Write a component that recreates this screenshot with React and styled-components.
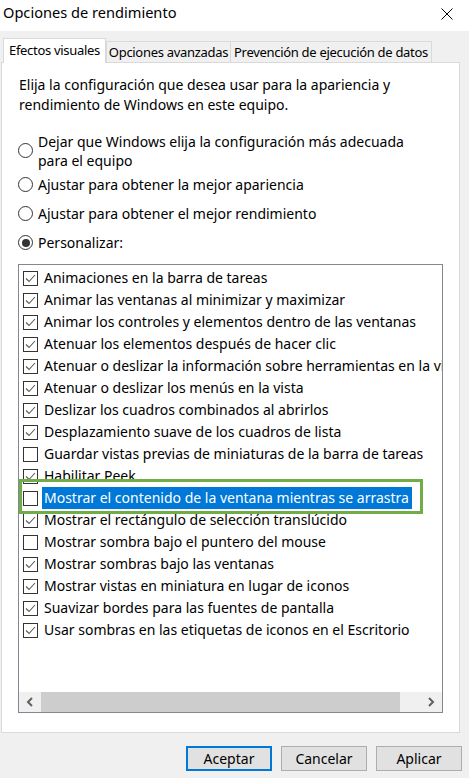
import React from 'react';
import styled, { createGlobalStyle } from 'styled-components';

const GlobalStyle = createGlobalStyle`
  html, body { margin: 0; padding: 0; background: #ffffff; }
  body { font-family: "Noto Sans", "Open Sans", sans-serif; }
  *, *::before, *::after { box-sizing: border-box; }
`;

const Window = styled.div`
  width: 469px;
  height: 778px;
  background: #f0f0f0;
  color: #000;
  font-size: 14px;
  display: flex;
  flex-direction: column;
`;

const TitleBar = styled.div`
  height: 31px;
  background: #ffffff;
  display: flex;
  align-items: flex-start;
  justify-content: space-between;
  padding: 2px 16px 0 3px;
`;

const Title = styled.span`
  font-size: 14.6px;
  line-height: 21px;
`;

const CloseIcon = styled.svg`
  margin-top: 6px;
  width: 12px;
  height: 12px;
`;

const TabStrip = styled.div`
  margin-top: 7px;
  margin-bottom: -1px;
  padding-left: 3px;
  height: 25px;
  display: flex;
  align-items: flex-end;
  position: relative;
  z-index: 2;
`;

const Tab = styled.div`
  width: ${p => p.$w}px;
  height: ${p => (p.$active ? 25 : 21)}px;
  margin-bottom: ${p => (p.$active ? 0 : 1)}px;
  margin-left: ${p => (p.$overlap ? -1 : 0)}px;
  background: ${p => (p.$active ? '#ffffff' : '#f0f0f0')};
  border: 1px solid #d9d9d9;
  border-bottom: none;
  display: flex;
  align-items: center;
  justify-content: center;
  padding-bottom: ${p => (p.$active ? 2 : 0)}px;
  white-space: nowrap;
  font-size: 13px;
  letter-spacing: -0.3px;
`;

const Panel = styled.div`
  margin-left: 1px;
  width: 459px;
  height: 671px;
  background: #ffffff;
  border: 1px solid #d9d9d9;
  padding: 12px 16px 0 16px;
  display: flex;
  flex-direction: column;
`;

const Description = styled.p`
  margin: 0 0 0 1px;
  line-height: 20px;
`;

const RadioGroup = styled.div`
  margin-top: 17px;
  display: flex;
  flex-direction: column;
  gap: 10px;
`;

const RadioRow = styled.label`
  display: flex;
  align-items: center;
  gap: 5px;
  line-height: 19px;
  margin-bottom: ${p => (p.$tight ? -5 : 0)}px;
`;

const RadioCircle = styled.span`
  flex: none;
  width: 15px;
  height: 15px;
  border: 1px solid #333333;
  border-radius: 50%;
  display: flex;
  align-items: center;
  justify-content: center;
  margin-top: ${p => (p.$up ? -2 : 0)}px;
  &::after {
    content: '';
    width: 8px;
    height: 8px;
    border-radius: 50%;
    background: #333333;
    display: ${p => (p.$checked ? 'block' : 'none')};
  }
`;

const ListBox = styled.div`
  margin-top: 12px;
  height: 449px;
  border: 1px solid #828790;
  display: flex;
  flex-direction: column;
`;

const ListViewport = styled.div`
  flex: 1;
  overflow: hidden;
  padding: 2px 0 0 4px;
`;

const Row = styled.div`
  position: relative;
  height: 22px;
  display: flex;
  align-items: center;
  gap: 4px;
  white-space: nowrap;
`;

const Box = styled.span`
  flex: none;
  width: 15px;
  height: 15px;
  border: 1px solid #333333;
  background: #ffffff;
  display: flex;
  align-items: center;
  justify-content: center;
`;

const ItemLabel = styled.span`
  padding: 0 3px 0 2px;
  line-height: 22px;
  background: ${p => (p.$selected ? '#0078d7' : 'transparent')};
  color: ${p => (p.$selected ? '#ffffff' : '#000000')};
`;

const Annotation = styled.div`
  position: absolute;
  left: -4px;
  top: -8px;
  width: 404px;
  height: 35px;
  border: 3px solid #70ad47;
  pointer-events: none;
  z-index: 3;
`;

const ScrollBar = styled.div`
  height: 20px;
  display: flex;
  background: #f0f0f0;
  flex: none;
`;

const ScrollButton = styled.div`
  width: 22px;
  display: flex;
  align-items: center;
  justify-content: center;
  background: #f0f0f0;
`;

const ScrollThumb = styled.div`
  width: 359px;
  background: #cdcdcd;
`;

const ScrollTrack = styled.div`
  flex: 1;
  background: #f0f0f0;
`;

const ButtonRow = styled.div`
  margin-top: 13px;
  display: flex;
  justify-content: flex-end;
  gap: 9px;
  padding-right: 7px;
`;

const Button = styled.button`
  width: 86px;
  height: 25px;
  font-family: inherit;
  font-size: 14px;
  color: #000;
  background: #e1e1e1;
  border: ${p => (p.$default ? '2px solid #0078d7' : '1px solid #adadad')};
  padding: 0;
  display: flex;
  align-items: center;
  justify-content: center;
`;

const items = [
  ['Animaciones en la barra de tareas', true],
  ['Animar las ventanas al minimizar y maximizar', true],
  ['Animar los controles y elementos dentro de las ventanas', true],
  ['Atenuar los elementos después de hacer clic', true],
  ['Atenuar o deslizar la información sobre herramientas en la vista', true],
  ['Atenuar o deslizar los menús en la vista', true],
  ['Deslizar los cuadros combinados al abrirlos', true],
  ['Desplazamiento suave de los cuadros de lista', true],
  ['Guardar vistas previas de miniaturas de la barra de tareas', false],
  ['Habilitar Peek', true],
  ['Mostrar el contenido de la ventana mientras se arrastra', false, true],
  ['Mostrar el rectángulo de selección translúcido', true],
  ['Mostrar sombra bajo el puntero del mouse', false],
  ['Mostrar sombras bajo las ventanas', true],
  ['Mostrar vistas en miniatura en lugar de iconos', true],
  ['Suavizar bordes para las fuentes de pantalla', true],
  ['Usar sombras en las etiquetas de iconos en el Escritorio', true],
];

const Check = () => (
  <svg width="13" height="13" viewBox="0 0 13 13">
    <polyline points="2,6.5 5,9.5 11,3" fill="none" stroke="#5a5a5a" strokeWidth="1.1" />
  </svg>
);

const Chevron = ({ dir }) => (
  <svg width="8" height="10" viewBox="0 0 8 10">
    <polyline
      points={dir === 'left' ? '6,1 2,5 6,9' : '2,1 6,5 2,9'}
      fill="none"
      stroke="#606060"
      strokeWidth="2"
    />
  </svg>
);

export default function App() {
  return (
    <>
      <GlobalStyle />
      <Window>
        <TitleBar>
          <Title>Opciones de rendimiento</Title>
          <CloseIcon viewBox="0 0 12 12">
            <path d="M0.5 0.5 L11.5 11.5 M11.5 0.5 L0.5 11.5" stroke="#000" strokeWidth="1" />
          </CloseIcon>
        </TitleBar>
        <TabStrip>
          <Tab $active $w={103}>Efectos visuales</Tab>
          <Tab $w={125}>Opciones avanzadas</Tab>
          <Tab $w={202} $overlap>Prevención de ejecución de datos</Tab>
        </TabStrip>
        <Panel>
          <Description>
            Elija la configuración que desea usar para la apariencia y
            <br />
            rendimiento de Windows en este equipo.
          </Description>
          <RadioGroup>
            <RadioRow $tight>
              <RadioCircle $up />
              <span>
                Dejar que Windows elija la configuración más adecuada
                <br />
                para el equipo
              </span>
            </RadioRow>
            <RadioRow>
              <RadioCircle />
              <span>Ajustar para obtener la mejor apariencia</span>
            </RadioRow>
            <RadioRow>
              <RadioCircle />
              <span>Ajustar para obtener el mejor rendimiento</span>
            </RadioRow>
            <RadioRow>
              <RadioCircle $checked />
              <span>Personalizar:</span>
            </RadioRow>
          </RadioGroup>
          <ListBox>
            <ListViewport>
              {items.map(([text, checked, selected]) => (
                <Row key={text}>
                  <Box>{checked && <Check />}</Box>
                  <ItemLabel $selected={selected}>{text}</ItemLabel>
                  {selected && <Annotation />}
                </Row>
              ))}
            </ListViewport>
            <ScrollBar>
              <ScrollButton>
                <Chevron dir="left" />
              </ScrollButton>
              <ScrollThumb />
              <ScrollTrack />
              <ScrollButton>
                <Chevron dir="right" />
              </ScrollButton>
            </ScrollBar>
          </ListBox>
        </Panel>
        <ButtonRow>
          <Button $default>Aceptar</Button>
          <Button>Cancelar</Button>
          <Button>Aplicar</Button>
        </ButtonRow>
      </Window>
    </>
  );
}
